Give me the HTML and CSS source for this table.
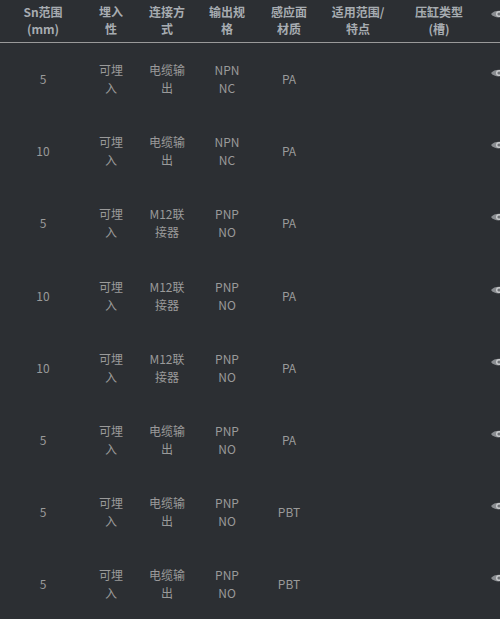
FILE: index.html
```html
<!DOCTYPE html>
<html lang="zh">
<head>
<meta charset="utf-8">
<link rel="stylesheet" href="styles.css">
</head>
<body>
<div class="wrap">
<table class="grid">
  <colgroup>
    <col class="c1"><col class="c2"><col class="c3"><col class="c4"><col class="c5"><col class="c6"><col class="c7"><col class="c8">
  </colgroup>
  <thead>
    <tr>
      <th>Sn范围<br>(mm)</th>
      <th>埋入<br>性</th>
      <th>连接方<br>式</th>
      <th>输出规<br>格</th>
      <th>感应面<br>材质</th>
      <th>适用范围/<br>特点</th>
      <th>压缸类型<br>(槽)</th>
      <th class="eyecell"><svg class="eye" viewBox="0 0 16 10" width="16" height="10"><path d="M0 5 C3 0.5 13 0.5 16 5 C13 9.5 3 9.5 0 5Z" fill="#8a8d91"/><circle cx="8" cy="5" r="3" fill="#c8cacc"/><circle cx="8" cy="5" r="1.6" fill="#6d7074"/></svg></th>
    </tr>
  </thead>
  <tbody>
    <tr><td>5</td><td>可埋<br>入</td><td>电缆输<br>出</td><td>NPN<br>NC</td><td>PA</td><td></td><td></td><td class="eyecell"><svg class="eye" viewBox="0 0 16 10" width="16" height="10"><path d="M0 5 C3 0.5 13 0.5 16 5 C13 9.5 3 9.5 0 5Z" fill="#8a8d91"/><circle cx="8" cy="5" r="3" fill="#c8cacc"/><circle cx="8" cy="5" r="1.6" fill="#6d7074"/></svg></td></tr>
    <tr><td>10</td><td>可埋<br>入</td><td>电缆输<br>出</td><td>NPN<br>NC</td><td>PA</td><td></td><td></td><td class="eyecell"><svg class="eye" viewBox="0 0 16 10" width="16" height="10"><path d="M0 5 C3 0.5 13 0.5 16 5 C13 9.5 3 9.5 0 5Z" fill="#8a8d91"/><circle cx="8" cy="5" r="3" fill="#c8cacc"/><circle cx="8" cy="5" r="1.6" fill="#6d7074"/></svg></td></tr>
    <tr><td>5</td><td>可埋<br>入</td><td>M12联<br>接器</td><td>PNP<br>NO</td><td>PA</td><td></td><td></td><td class="eyecell"><svg class="eye" viewBox="0 0 16 10" width="16" height="10"><path d="M0 5 C3 0.5 13 0.5 16 5 C13 9.5 3 9.5 0 5Z" fill="#8a8d91"/><circle cx="8" cy="5" r="3" fill="#c8cacc"/><circle cx="8" cy="5" r="1.6" fill="#6d7074"/></svg></td></tr>
    <tr><td>10</td><td>可埋<br>入</td><td>M12联<br>接器</td><td>PNP<br>NO</td><td>PA</td><td></td><td></td><td class="eyecell"><svg class="eye" viewBox="0 0 16 10" width="16" height="10"><path d="M0 5 C3 0.5 13 0.5 16 5 C13 9.5 3 9.5 0 5Z" fill="#8a8d91"/><circle cx="8" cy="5" r="3" fill="#c8cacc"/><circle cx="8" cy="5" r="1.6" fill="#6d7074"/></svg></td></tr>
    <tr><td>10</td><td>可埋<br>入</td><td>M12联<br>接器</td><td>PNP<br>NO</td><td>PA</td><td></td><td></td><td class="eyecell"><svg class="eye" viewBox="0 0 16 10" width="16" height="10"><path d="M0 5 C3 0.5 13 0.5 16 5 C13 9.5 3 9.5 0 5Z" fill="#8a8d91"/><circle cx="8" cy="5" r="3" fill="#c8cacc"/><circle cx="8" cy="5" r="1.6" fill="#6d7074"/></svg></td></tr>
    <tr><td>5</td><td>可埋<br>入</td><td>电缆输<br>出</td><td>PNP<br>NO</td><td>PA</td><td></td><td></td><td class="eyecell"><svg class="eye" viewBox="0 0 16 10" width="16" height="10"><path d="M0 5 C3 0.5 13 0.5 16 5 C13 9.5 3 9.5 0 5Z" fill="#8a8d91"/><circle cx="8" cy="5" r="3" fill="#c8cacc"/><circle cx="8" cy="5" r="1.6" fill="#6d7074"/></svg></td></tr>
    <tr><td>5</td><td>可埋<br>入</td><td>电缆输<br>出</td><td>PNP<br>NO</td><td>PBT</td><td></td><td></td><td class="eyecell"><svg class="eye" viewBox="0 0 16 10" width="16" height="10"><path d="M0 5 C3 0.5 13 0.5 16 5 C13 9.5 3 9.5 0 5Z" fill="#8a8d91"/><circle cx="8" cy="5" r="3" fill="#c8cacc"/><circle cx="8" cy="5" r="1.6" fill="#6d7074"/></svg></td></tr>
    <tr><td>5</td><td>可埋<br>入</td><td>电缆输<br>出</td><td>PNP<br>NO</td><td>PBT</td><td></td><td></td><td class="eyecell"><svg class="eye" viewBox="0 0 16 10" width="16" height="10"><path d="M0 5 C3 0.5 13 0.5 16 5 C13 9.5 3 9.5 0 5Z" fill="#8a8d91"/><circle cx="8" cy="5" r="3" fill="#c8cacc"/><circle cx="8" cy="5" r="1.6" fill="#6d7074"/></svg></td></tr>
  </tbody>
</table>
</div>
</body>
</html>
```

FILE: styles.css
```css
html, body {
  margin: 0;
  padding: 0;
  background: #2c2f33;
  overflow: hidden;
  height: 100%;
}
.wrap {
  width: 500px;
  overflow: hidden;
}
.grid {
  border-collapse: collapse;
  table-layout: fixed;
  width: 530px;
  font-family: "Noto Sans CJK SC", "Noto Sans", sans-serif;
  font-size: 12px;
  color: #9a9a9a;
}
.c1 { width: 86px; }
.c2 { width: 50px; }
.c3 { width: 62px; }
.c4 { width: 58px; }
.c5 { width: 66px; }
.c6 { width: 72px; }
.c7 { width: 90px; }
.c8 { width: 46px; }
.grid th {
  font-weight: bold;
  color: #a7acb1;
  line-height: 17px;
  padding: 3px 0 5px;
  text-align: center;
  white-space: nowrap;
  border-bottom: 1px solid #9a9a9a;
  vertical-align: middle;
}
.grid td {
  line-height: 18px;
  padding: 18.1px 0;
  text-align: center;
  white-space: nowrap;
  vertical-align: middle;
}
.grid .eyecell {
  text-align: left;
  padding-left: 7px;
}
.eye {
  display: block;
  margin-bottom: 12px;
}
```
